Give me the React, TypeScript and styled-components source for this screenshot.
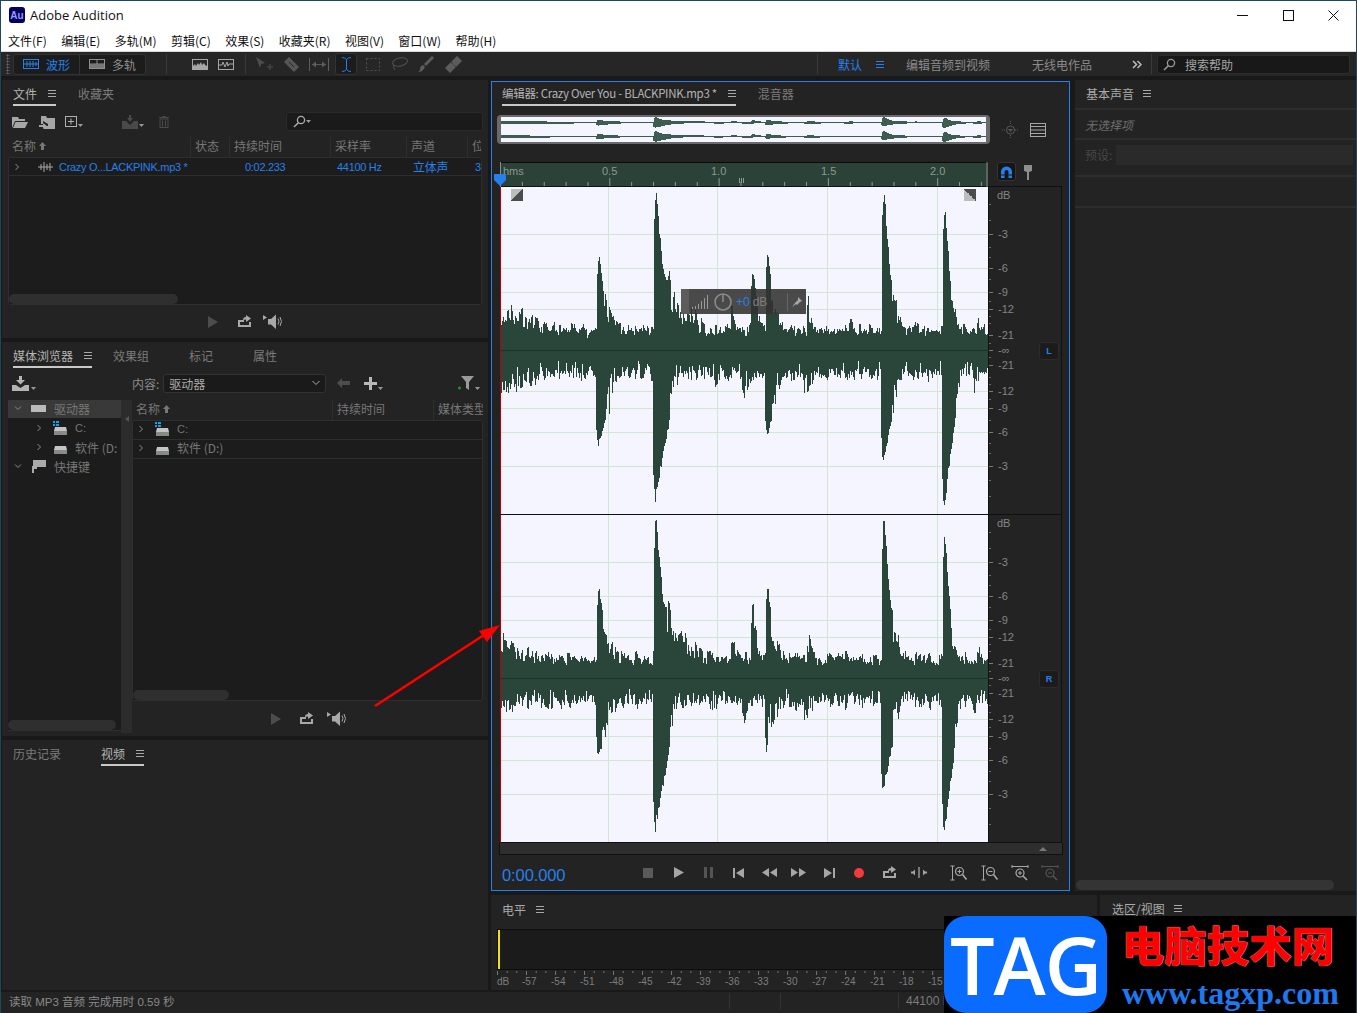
import React from "react";
import styled, { createGlobalStyle } from "styled-components";

const BLUE = "#2680eb";
const CJK = `"Noto Sans CJK SC", "Liberation Sans", sans-serif`;

const Global = createGlobalStyle`
  html, body { margin: 0; padding: 0; overflow: hidden; background: #1a1a1a; }
  * { box-sizing: border-box; }
`;

const Root = styled.div`
  position: relative; width: 1357px; height: 1013px; overflow: hidden;
  display: flex; flex-direction: column; background: #191919;
  border-top: 1px solid #1d4763; border-left: 1px solid #1d4763; border-right: 1px solid #1d4763;
  font-family: ${CJK}; font-size: 12px; color: #9a9a9a;
`;
const TitleBar = styled.div`
  height: 28px; background: #fff; display: flex; align-items: center; padding-left: 8px; flex: none;
  color: #111; font: 13px "Open Sans", "Noto Sans", sans-serif;
`;
const AuLogo = styled.div`
  width: 16px; height: 16px; border-radius: 3px; background: #00005b; color: #9999ff;
  font: bold 10px "Liberation Sans", sans-serif; display: flex; align-items: center; justify-content: center;
  margin-right: 5px;
`;
const WinButtons = styled.div`margin-left: auto; display: flex; align-items: center; gap: 34.5px; margin-right: 17px;`;
const MenuBar = styled.div`
  height: 22px; background: #fff; color: #111; display: flex; align-items: center; gap: 14.4px; padding-left: 7px; flex: none; font-size: 12px;
`;
const Toolbar = styled.div`height: 25px; background: #262626; display: flex; align-items: center; flex: none; border-top: 1px solid #d8d8d8;`;
const Slot = styled.div<{ $ml?: number; $w?: number; $drop?: number }>`
  flex: none; margin-left: ${p => p.$ml ?? 0}px; ${p => (p.$w ? `width: ${p.$w}px;` : "")}
  ${p => (p.$drop ? `margin-top: ${p.$drop}px;` : "")}
  display: flex; align-items: center; justify-content: center;
`;
const Grip = styled.div`width: 4px; height: 20px; margin-left: 5px; background-image: radial-gradient(#666 45%, transparent 50%); background-size: 3px 3px;`;
const Segment = styled.div`
  margin-left: 3px; width: 133px; height: 21px; display: flex; background: #1c1c1c; border: 1px solid #333; border-radius: 3px;
`;
const SegItem = styled.div<{ $on?: boolean }>`
  flex: 1; display: flex; align-items: center; gap: 7px; padding-left: 9px; color: ${p => (p.$on ? BLUE : "#8f8f8f")};
  & + & { border-left: 1px solid #333; }
`;
const VSep = styled.div<{ $ml?: number }>`width: 1px; height: 20px; background: #3a3a3a; margin-left: ${p => p.$ml ?? 0}px; flex: none;`;
const ToolOn = styled.div`
  width: 22px; height: 22px; margin-left: 6px; background: #1c1c1c; border: 1px solid #333; border-radius: 3px;
  display: flex; align-items: center; justify-content: center; flex: none;
`;
const WorkTabs = styled.div`margin-left: auto; display: flex; align-items: center; height: 100%;`;
const WorkTab = styled.span<{ $on?: boolean; $ml?: number }>`color: ${p => (p.$on ? BLUE : "#8a8a8a")}; margin-left: ${p => p.$ml ?? 0}px; flex: none;`;
const HelpSearch = styled.div`
  width: 193px; height: 19px; margin: 0 6px 0 5px; background: #181818; border: 1px solid #2c2c2c; border-radius: 3px;
  display: flex; align-items: center; gap: 9px; padding-left: 5px; color: #a4a4a4;
`;
const Work = styled.div`
  flex: none; height: 914px; padding: 4px 0 0 1px; display: grid; grid-template-columns: 486px 1fr; column-gap: 3px;
`;
const LeftCol = styled.div`display: grid; grid-template-rows: 258px 394px 250px; row-gap: 4px;`;
const RightArea = styled.div`display: grid; grid-template-rows: 811px 95px; row-gap: 4px; min-width: 0;`;
const TopRow = styled.div`display: grid; grid-template-columns: 579px 1fr; column-gap: 5px;`;
const BottomRow = styled.div`display: grid; grid-template-columns: 606px 1fr; column-gap: 3px;`;
const Panel = styled.section`background: #232323; display: flex; flex-direction: column; min-height: 0; min-width: 0; padding-top: 2px; position: relative;`;
const TabBar = styled.div`height: 24px; display: flex; flex: none; padding-left: 11px;`;
const Tab = styled.div<{ $on?: boolean; $ml?: number }>`
  height: 24px; line-height: 23px; display: flex; align-items: center; gap: 11px; margin-left: ${p => p.$ml ?? 0}px;
  color: ${p => (p.$on ? "#b4b4b4" : "#7b7b7b")}; border-bottom: 2px solid ${p => (p.$on ? "#c9c9c9" : "transparent")};
`;
const Ham = () => (
  <svg width="8" height="7" viewBox="0 0 8 7" style={{ flex: "none" }}>
    <path d="M0 .5h8M0 3.5h8M0 6.5h8" stroke="#a8a8a8" strokeWidth="1" />
  </svg>
);
const ActionRow = styled.div<{ $h: number; $pb?: number }>`
  height: ${p => p.$h}px; padding-bottom: ${p => p.$pb ?? 0}px; display: flex; align-items: center; flex: none; position: relative;
`;
const SearchBox = styled.div`
  width: 197px; height: 19px; margin-left: auto; margin-right: 5px; background: #1a1a1a; border: 1px solid #2a2a2a; border-radius: 3px;
  display: flex; align-items: center; padding-left: 6px;
`;
const FileHead = styled.div`
  height: 20px; margin: 0 6px; display: grid; grid-template-columns: 182px 39px 101px 76px 61px 14px; flex: none; overflow: hidden; color: #777;
`;
const HeadCell = styled.div`
  padding: 0 0 3px 4px; white-space: nowrap; overflow: hidden; display: flex; align-items: center; gap: 3px;
  & + & { border-left: 1px solid #2e2e2e; }
`;
const ListBox = styled.div<{ $h: number; $w?: number }>`
  height: ${p => p.$h}px; ${p => (p.$w ? `width: ${p.$w}px;` : "")} background: #1c1c1c; border: 1px solid #2e2e2e; border-radius: 2px; flex: none; position: relative; overflow: hidden;
`;
const FileRow = styled.div`
  height: 18px; display: grid; grid-template-columns: 182px 39px 101px 76px 61px 14px; color: ${BLUE}; border-bottom: 1px solid #2e2e2e;
  font: 11px "Liberation Sans", sans-serif; letter-spacing: -.3px; align-items: center;
`;
const FileName = styled.div`display: flex; align-items: center; padding-left: 4px; white-space: nowrap;`;
const Cell = styled.div<{ $pl?: number; $fs?: number }>`
  padding-left: ${p => p.$pl ?? 0}px; white-space: nowrap; overflow: hidden; font-family: "Liberation Sans", ${CJK};
  ${p => (p.$fs ? `font-size: ${p.$fs}px;` : "")}
`;
const Thumb = styled.div<{ $w: number }>`
  position: absolute; left: 0; bottom: 0; width: ${p => p.$w}px; height: 10px; background: #2f2f2f; border-radius: 5px;
`;
const Footer = styled.div<{ $pl: number }>`flex: 1; display: flex; align-items: center; padding-left: ${p => p.$pl}px; gap: 0;`;
const Padded = styled.div`padding: 0 0 0 6px;`;

const MediaBody = styled.div`display: flex; flex: 1; min-height: 0; padding-left: 6px;`;
const Tree = styled.div`width: 113px; height: 331px; background: #1c1c1c; border-bottom: 1px solid #2e2e2e; position: relative; flex: none; font-size: 12px; color: #777; overflow: hidden;`;
const TreeRow = styled.div<{ $sel?: boolean; $pl: number; $mt?: number }>`
  height: 18px; display: flex; align-items: center; padding-left: ${p => p.$pl}px; background: ${p => (p.$sel ? "#393939" : "transparent")};
  ${p => (p.$sel ? "padding-bottom: 2px;" : "")}
  margin-bottom: 1px; margin-top: ${p => p.$mt ?? 0}px; white-space: nowrap;
`;
const TreeGap = styled.span<{ $w: number }>`display: inline-block; flex: none; width: ${p => p.$w}px;`;
const Splitter = styled.div`
  width: 11px; height: 333px; background: #2c2c2c; flex: none; display: flex; flex-direction: column; align-items: center; position: relative;
`;
const SplitArrow = styled.div`
  width: 0; height: 0; margin-top: 16px; border-style: solid; border-width: 3px 4px 3px 0; border-color: transparent #555 transparent transparent;
`;
const SplitDots = styled.div`
  width: 4px; height: 24px; margin-top: 131px; background-image: radial-gradient(#666 40%, transparent 45%); background-size: 2px 2px;
`;
const MediaRight = styled.div`flex: 1; min-width: 0; padding-right: 5px; display: flex; flex-direction: column;`;
const MediaHead = styled.div`height: 20px; display: grid; grid-template-columns: 200px 101px 1fr; color: #777; flex: none; overflow: hidden;`;
const MediaRow = styled.div`height: 19px; display: flex; align-items: center; padding: 0 0 3px 4px; border-bottom: 1px solid #2e2e2e; color: #777; white-space: nowrap;`;
const ContentLabel = styled.span`color: #8a8a8a; margin-left: 96px; flex: none;`;
const Select = styled.div`
  width: 163px; height: 19px; margin-left: 4px; background: #1a1a1a; border: 1px solid #333; border-radius: 3px; color: #aaa;
  display: flex; align-items: center; justify-content: space-between; padding: 0 5px; flex: none;
`;

const Editor = styled.section`
  margin-top: 1px; height: 810px; background: #232323; border: 1px solid ${BLUE}; display: flex; flex-direction: column; min-width: 0;
`;
const EditorTabs = styled(TabBar)`padding-left: 10px; color: #aaa;`;
const EdName = styled.span`white-space: nowrap; font-family: "Noto Sans CJK SC", sans-serif; letter-spacing: -.3px; font-size: 11.5px;`;
const OverviewRow = styled.div`margin: 9px 0 0 5px; height: 29px; display: flex; align-items: center; flex: none;`;
const OverviewFrame = styled.div`
  width: 493px; height: 29px; background: #f4f5ff; border: 2px solid #6a6a6a; border-left-width: 4px; border-right-width: 4px; border-radius: 4px; overflow: hidden; flex: none; display: flex;
`;
const RulerRow = styled.div`margin: 18px 0 0 8px; height: 25px; display: flex; flex: none; position: relative;`;
const Magnet = styled.div`
  width: 19px; height: 19px; margin: 0 0 0 9px; background: #161616; border: 1px solid #333; border-radius: 3px; display: flex; align-items: center; justify-content: center; flex: none;
`;
const Playhead = styled.div`position: absolute; left: -6px; top: 12px;`;
const ChannelRow = styled.div`margin-left: 8px; height: 328px; display: flex; flex: none;`;
const Wave = styled.div`width: 488px; height: 328px; background: #f4f5ff; position: relative; flex: none; border-left: 1px solid #b00; border-bottom: 1px solid #111;`;
const Scale = styled.div`width: 74px; height: 328px; border: 1px solid #111; border-top: none; position: relative; flex: none; box-shadow: 0 -1px 0 #111;`;
const ChanBadge = styled.div`
  position: absolute; right: 2px; top: 155px; width: 20px; height: 18px; background: #1b1b1b; border: 1px solid #2b2b2b; border-radius: 3px; color: ${BLUE};
  font: bold 9px "Liberation Sans", sans-serif; display: flex; align-items: center; justify-content: center;
`;
const Fade = styled.div<{ $right?: boolean }>`
  position: absolute; top: 2px; ${p => (p.$right ? "right: 12px;" : "left: 10px;")} width: 12px; height: 12px;
  background: linear-gradient(${p => (p.$right ? "45deg" : "135deg")}, #bdbdbd 50%, #4c4c4c 50%);
`;
const Hud = styled.div`
  position: absolute; left: 180px; top: 102px; width: 125px; height: 25px; background: rgba(50,50,50,.88); display: flex; align-items: center; color: #7d7d7d;
  font: 11px "Liberation Sans", sans-serif;
`;
const HudGrip = styled.div`width: 8px; height: 25px; background: #5c5c5c; flex: none;`;
const HudGain = styled.span`color: ${BLUE}; margin-left: 4px; font-size: 12px;`;
const HudUnit = styled.span`margin-left: 3px; font-size: 12px;`;
const HudSep = styled.div`width: 1px; height: 18px; background: #666; margin-left: 20px; flex: none;`;
const HScroll = styled.div`
  margin-left: 7px; width: 564px; height: 12px; background: #2e2e2e; border: 1px solid #111; border-top: none; flex: none;
  display: flex; align-items: center; justify-content: center; position: relative;
`;
const HGrip = styled.div`width: 24px; height: 5px; background-image: radial-gradient(#777 40%, transparent 45%); background-size: 2px 2px;`;
const HUp = styled.div`
  position: absolute; right: 15px; top: 4px; width: 0; height: 0; border-style: solid; border-width: 0 4px 4px 4px; border-color: transparent transparent #777 transparent;
`;
const Transport = styled.div`flex: 1; display: flex; align-items: center; padding-left: 10px;`;
const Clock = styled.div`color: ${BLUE}; font: 16.5px "Liberation Sans", sans-serif; width: 141px; flex: none; letter-spacing: -.1px; margin-top: 5px;`;

const SideHeader = styled.div<{ $plain?: boolean }>`
  height: 28px; display: flex; align-items: center; gap: 9px; padding: 0 0 4px ${p => (p.$plain ? 12 : 11)}px; color: #aaa; flex: none;
  border-bottom: 2px solid ${p => (p.$plain ? "transparent" : "#2d2d2d")};
`;
const SideNote = styled.div`height: 30px; display: flex; align-items: center; padding: 0 0 0 10px; color: #6e6e6e; font-style: italic; flex: none; border-bottom: 2px solid #2d2d2d;`;
const PresetRow = styled.div`height: 37px; display: flex; align-items: center; padding: 0 0 6px 10px; color: #474747; flex: none; border-bottom: 2px solid #2d2d2d;`;
const PresetInput = styled.div`width: 237px; height: 20px; margin-left: 4px; background: #2a2a2a; flex: none;`;
const SideBlank = styled.div`height: 31px; flex: none; border-bottom: 2px solid #2d2d2d;`;
const SideScroll = styled.div`margin: auto 0 1px 1px; width: 258px; height: 10px; background: #343434; border-radius: 5px; flex: none;`;

const LevelHead = styled.div`height: 26px; display: flex; align-items: center; gap: 10px; padding: 0 0 2px 11px; color: #a8a8a8; flex: none;`;
const LevelBox = styled.div`margin: 6px 0 0 6px; height: 41px; width: 600px; background: #1b1b1b; border: 1px solid #0e0e0e; flex: none; display: flex;`;
const Yellow = styled.div`width: 2px; height: 100%; background: #f1e21a; flex: none;`;
const LevelScale = styled.svg`margin-left: 6px; flex: none; display: block;`;

const Status = styled.footer`
  height: 21px; margin-top: 2px; padding: 0 0 3px 8px; background: #232323; display: flex; align-items: center; color: #8a8a8a; flex: none; font-size: 11.5px;
`;
const StatusSep = styled.div<{ $ml: number }>`width: 1px; height: 16px; background: #333; margin-left: ${p => p.$ml}px; flex: none;`;
const StatusText = styled.div`width: 720px; flex: none; white-space: nowrap; font-family: "Liberation Sans", ${CJK};`;
const StatusRate = styled.span`margin-left: 7px; font: 12px "Liberation Sans", sans-serif; color: #7c7c7c; white-space: nowrap;`;

const Watermark = styled.div`
  position: absolute; right: -1px; bottom: 0; width: 413px; height: 97px; background: #000; display: flex;
`;
const TagBadge = styled.div`
  width: 163px; height: 97px; background: #0a6cff; border-radius: 22px; color: #fff; flex: none;
  display: flex; align-items: center; justify-content: center; font: 600 79px/1 "Open Sans", sans-serif; letter-spacing: -1px;
`;
const TagRight = styled.div`display: flex; flex-direction: column; margin-left: 15px; flex: none;`;
const TagCn = styled.div`color: #ff0000; font: 900 42.5px/46px "Noto Sans CJK SC", sans-serif; margin-top: 5px; white-space: nowrap; text-shadow: 0 0 1px #fff;`;
const TagUrl = styled.div`color: #1f78ee; font: bold 32px/36px "Liberation Serif", serif; margin-top: 8px; white-space: nowrap;`;
const ArrowLayer = styled.svg`position: absolute; left: 0; top: 0; pointer-events: none;`;

/* ---------- waveform ---------- */
type Peak = [number, number, number, number, number];
function mulberry(seed: number) {
  return () => {
    seed |= 0; seed = (seed + 0x6d2b79f5) | 0;
    let t = Math.imul(seed ^ (seed >>> 15), 1 | seed);
    t = (t + Math.imul(t ^ (t >>> 7), 61 | t)) ^ t;
    return ((t ^ (t >>> 14)) >>> 0) / 4294967296;
  };
}
function env(x: number, peaks: Peak[], floor: number) {
  let v = floor;
  for (const [px, a, w, tail, tau] of peaks) {
    const d = x - px;
    if (d < -2) continue;
    const knee = Math.max(tail, a * 0.5);
    let e: number;
    if (d <= 0) e = a * (1 + d * 0.12);
    else if (d <= w) e = a - (a - knee) * (d / Math.max(w, 1));
    else e = tail * Math.exp(-(d - w) / tau) + (knee - tail) * Math.exp(-(d - w) / 4);
    v = Math.max(v, e);
  }
  return v;
}
function wavePath(up: Peak[], down: Peak[], seed: number, cy: number) {
  const r = mulberry(seed);
  let d = "";
  let hold = 0;
  for (let x = 0; x < 488; x++) {
    if (x % 2 === 0) hold = r();
    const eu = env(x + 0.5, up, 24);
    const el = env(x + 0.5, down, 30);
    const fu = eu > 70 ? 0.93 + 0.07 * r() : 0.5 + 0.4 * hold + 0.26 * r();
    let fl = el > 70 ? 0.92 + 0.08 * r() : 0.5 + 0.34 * r() + 0.26 * hold;
    if (el <= 70 && r() < 0.12) fl *= 0.62;
    d += `M${x + 0.5} ${(cy - eu * fu).toFixed(1)}V${(cy + el * fl).toFixed(1)}`;
  }
  return d;
}
function overviewPath(up: Peak[], down: Peak[], cy: number) {
  let d = "";
  for (let x = 0; x < 485; x++) {
    const u = 0.7 + 5 * Math.pow(env(x + 0.5, up, 0) / 165, 1.5);
    const l = 0.7 + 5 * Math.pow(env(x + 0.5, down, 0) / 165, 1.5);
    d += `M${x + 0.5} ${(cy - u).toFixed(1)}V${(cy + l).toFixed(1)}`;
  }
  return d;
}
const UP1: Peak[] = [[0, 52, 1, 46, 90], [98, 98, 7, 44, 30], [155, 166, 7, 76, 42], [168, 84, 4, 52, 32], [232, 48, 3, 32, 8], [252, 84, 5, 36, 10], [267, 104, 5, 46, 18], [308, 56, 3, 34, 18], [383, 168, 6, 56, 24], [444, 152, 5, 52, 16], [478, 40, 2, 28, 8], [350, 36, 2, 26, 14], [415, 34, 2, 26, 10]];
const DOWN1: Peak[] = [[0, 52, 1, 50, 90], [97, 100, 14, 48, 12], [154, 155, 14, 66, 14], [215, 42, 5, 30, 10], [243, 62, 6, 36, 8], [266, 92, 10, 50, 14], [305, 56, 6, 40, 16], [382, 115, 12, 52, 14], [443, 166, 10, 56, 12], [474, 50, 3, 36, 8], [345, 40, 2, 32, 14]];
const UP2: Peak[] = [[0, 56, 1, 42, 70], [98, 94, 7, 42, 28], [155, 168, 7, 74, 42], [168, 82, 4, 50, 32], [232, 46, 3, 30, 8], [252, 82, 5, 36, 10], [267, 96, 5, 44, 18], [308, 52, 3, 32, 18], [383, 168, 6, 52, 24], [444, 152, 5, 50, 16], [478, 44, 2, 28, 8]];
const DOWN2: Peak[] = [[0, 42, 1, 38, 90], [97, 82, 14, 42, 12], [154, 157, 14, 60, 14], [215, 36, 5, 28, 10], [243, 54, 6, 32, 8], [266, 74, 10, 44, 14], [305, 50, 6, 36, 16], [382, 117, 12, 50, 14], [443, 163, 10, 52, 12], [474, 44, 3, 32, 8]];
const PATH1 = wavePath(UP1, DOWN1, 7, 163);
const PATH2 = wavePath(UP2, DOWN2, 23, 163);
const OV1 = overviewPath(UP1, DOWN1, 5.5);
const OV2 = overviewPath(UP2, DOWN2, 19.5);

const DB_Y = [47, 81, 105, 122, 148, 178, 204, 221, 245, 279];
const GRID_X = [107, 216, 326, 436];

const Channel = ({ path }: { path: string }) => (
  <svg width="487" height="327" viewBox="0 0 487 327" style={{ display: "block" }} shapeRendering="crispEdges">
    {DB_Y.map(y => <path key={y} d={`M0 ${y + .5}H487`} stroke="#d3e5d3" />)}
    {GRID_X.map(x => <path key={x} d={`M${x + .5} 0V327`} stroke="#d3e5d3" />)}
    <path d={path} stroke="#2a4539" strokeWidth="1" fill="none" />
    <path d="M0 163.5H487" stroke="#1d3229" />
  </svg>
);

const SCALE_LABELS: [number, string][] = [[47, "-3"], [81, "-6"], [105, "-9"], [122, "-12"], [148, "-21"], [163, "-∞"], [178, "-21"], [204, "-12"], [221, "-9"], [245, "-6"], [279, "-3"]];
const ScaleDraw = () => (
  <svg width="72" height="327" viewBox="0 0 72 327" style={{ display: "block" }} fontFamily="Liberation Sans, sans-serif" fontSize="11" fill="#858585">
    <text x="8" y="12">dB</text>
    {SCALE_LABELS.map(([y, t], i) => (
      <g key={i}>
        <path d={`M0 ${y + .5}H4`} stroke="#7a7a7a" />
        <text x="9" y={y + 4}>{t}</text>
      </g>
    ))}
    {[17, 33, 60, 70, 92, 114, 129, 136, 156, 170, 190, 197, 212, 233, 256, 266, 293, 309].map(y => <path key={y} d={`M0 ${y + .5}H2`} stroke="#6a6a6a" />)}
  </svg>
);

const Ruler = () => {
  const ticks: number[] = [];
  for (let i = 0; i < 23; i++) ticks.push(i * 21.86);
  return (
    <svg width="488" height="25" viewBox="0 0 488 25" style={{ display: "block", flex: "none" }} fontFamily="Liberation Sans, sans-serif" fontSize="11" fill="#8b9a92">
      <rect width="488" height="25" fill="#2a4237" />
      <path d="M0 .5H488" stroke="#0a0a0a" />
      <path d="M0 24.5H488" stroke="#111" />
      <text x="3" y="13">hms</text>
      {[["0.5", 102], ["1.0", 211], ["1.5", 321], ["2.0", 430]].map(([t, x]) => <text key={t} x={x} y="13">{t}</text>)}
      {ticks.map((x, i) => <path key={i} d={`M${x + .5} ${i % 5 === 0 ? 16 : 20}V24`} stroke="#8d9c95" />)}
      <path d="M239.5 16V21M241.5 16V21M243.5 16V21" stroke="#8b9a92" />
      <path d="M.5 0V25M487 0V25" stroke="#8a8a8a" />
    </svg>
  );
};

/* ---------- icons ---------- */
const G = ({ w, h, c = "#9a9a9a", children }: { w: number; h: number; c?: string; children: React.ReactNode }) => (
  <svg width={w} height={h} viewBox={`0 0 ${w} ${h}`} style={{ color: c, display: "block", flex: "none" }} fill="currentColor" stroke="none">{children}</svg>
);
const stroke = { stroke: "currentColor", fill: "none" } as const;
const Chev = ({ down }: { down?: boolean }) => (
  <G w={8} h={8} c="#8a8a8a"><path d={down ? "M1 2.5l3 3 3-3" : "M2.5 1l3 3-3 3"} {...stroke} strokeWidth="1" /></G>
);
const MiniWave = ({ c }: { c: string }) => (
  <G w={15} h={10} c={c}><path d="M0 5h15M3 2v6M6 0v10M9 2v6M12 1v8" {...stroke} /></G>
);
const PlayIcon = ({ c }: { c: string }) => <G w={10} h={12} c={c}><path d="M0 0l10 6-10 6z" /></G>;
const LoopIcon = ({ c = "#a8a8a8" }: { c?: string }) => (
  <G w={15} h={13} c={c}><path d="M1 5h6v2H3v3h9V7h2v5H1zM6 5q0-3 3-3V0l5 3.5L9 7V4.5q-2 0-3 .5z" /></G>
);
const SpeakerIcon = () => (
  <G w={20} h={15} c="#a8a8a8">
    <path d="M0 1l4 2.500L0 6zM5 5h3l5-4.500v14.500l-5-4.500H5z" />
    <path d="M15 4.500q2 3 0 6M17 3q3 4.500 0 9" {...stroke} />
  </G>
);
const DriveIcon = ({ win }: { win?: boolean }) => (
  <G w={15} h={14}>
    {win && <path d="M0 0h2v2H0zM3 0h3v2H3zM0 3h2v2H0zM3 3h3v2H3z" fill="#19a0e8" />}
    <path d="M1 10l1-4h11l1 4z" fill="#c4c4c4" />
    <rect x="1" y="10" width="13" height="4" fill="#888" />
    <rect x="10" y="11.500" width="2" height="1" fill="#4c4" />
  </G>
);
const SearchGlass = ({ c = "#9a9a9a" }: { c?: string }) => (
  <G w={13} h={13} c={c}><circle cx="8" cy="5" r="3.6" {...stroke} strokeWidth="1.3" /><path d="M5.300 7.700L1 12" {...stroke} strokeWidth="1.5" /></G>
);
const Caret = () => <G w={5} h={3} c="#999"><path d="M0 0h5L2.500 3z" /></G>;

const ZoomIcon = ({ kind, c = "#a8a8a8" }: { kind: "v+" | "v-" | "h+" | "h-"; c?: string }) => {
  const plus = kind.endsWith("+");
  const vert = kind.startsWith("v");
  return (
    <G w={18} h={16} c={c}>
      {vert
        ? <path d="M2.500 1v14M.5 1h4M.5 15h4" {...stroke} />
        : <path d="M1 1.500h16M1 0v3M17 0v3" {...stroke} />}
      <circle cx={vert ? 9.500 : 9} cy={vert ? 6.500 : 8} r="4" {...stroke} strokeWidth="1.200" />
      <path d={vert ? "M12.500 9.500l4 5" : "M12 11l4 4"} {...stroke} strokeWidth="1.600" />
      <path d={vert ? `M7.500 6.500h4${plus ? "M9.500 4.500v4" : ""}` : `M7 8h4${plus ? "M9 6v4" : ""}`} {...stroke} />
    </G>
  );
};

export default function App() {
  return (
    <>
      <Global />
      <Root>
        <TitleBar>
          <AuLogo>Au</AuLogo>
          Adobe Audition
          <WinButtons>
            <svg width="11" height="11" viewBox="0 0 11 11"><path d="M0 5.500h11" stroke="#111" /></svg>
            <svg width="11" height="11" viewBox="0 0 11 11"><rect x=".5" y=".5" width="10" height="10" fill="none" stroke="#111" /></svg>
            <svg width="11" height="11" viewBox="0 0 11 11"><path d="M.5 .5l10 10M10.500 .5l-10 10" stroke="#111" /></svg>
          </WinButtons>
        </TitleBar>
        <MenuBar>
          {["文件(F)", "编辑(E)", "多轨(M)", "剪辑(C)", "效果(S)", "收藏夹(R)", "视图(V)", "窗口(W)", "帮助(H)"].map(m => <span key={m}>{m}</span>)}
        </MenuBar>
        <Toolbar>
          <Grip />
          <Segment>
            <SegItem $on><G w={16} h={10} c={BLUE}><rect x=".5" y=".5" width="15" height="9" {...stroke} /><path d="M0 5h16M4 2v6M7 2v6M10 2v6M13 3v4" {...stroke} /></G><span>波形</span></SegItem>
            <SegItem><G w={16} h={10} c="#8f8f8f"><rect x=".5" y=".5" width="15" height="9" {...stroke} /><path d="M0 5h16M8 0v5" {...stroke} /><rect x="1" y="5" width="14" height="4" fill="#777" /></G><span>多轨</span></SegItem>
          </Segment>
          <VSep $ml={20} />
          <Slot $ml={25}><G w={16} h={11} c="#a6a6a6"><rect x=".5" y=".5" width="15" height="10" {...stroke} /><path d="M1 10V7l2-2 1 2 2-3 1 2 2-3 1 3 2-2 1 2 2 1v3z" /></G></Slot>
          <Slot $ml={10}><G w={16} h={11} c="#a6a6a6"><rect x=".5" y=".5" width="15" height="10" {...stroke} /><path d="M1 6h3l1-3 2 5 2-5 1 4 1-2h4" {...stroke} /></G></Slot>
          <VSep $ml={11} />
          <Slot $ml={9}><G w={18} h={15} c="#4e4e4e"><path d="M1 0l9 6-4 1-1 4z" /><path d="M12 10h6M15 7v6" {...stroke} /></G></Slot>
          <Slot $ml={11}><G w={17} h={17} c="#565656"><path d="M0 6l5-5 10 10-5 5z" /><path d="M5 6l5 5" stroke="#262626" /></G></Slot>
          <Slot $ml={8}><G w={20} h={13} c="#5c5c5c"><path d="M.5 0v13M19.500 0v13M3 6.500h14" {...stroke} /><path d="M3 6.500l4-3v6zM17 6.500l-4-3v6z" /></G></Slot>
          <ToolOn><G w={9} h={15} c={BLUE}><path d="M0 .5q3 0 4.500 2Q6 .5 9 .5M4.500 2.500v10M0 14.500q3 0 4.500-2 1.500 2 4.500 2" {...stroke} /></G></ToolOn>
          <Slot $ml={9}><G w={14} h={13} c="#535353"><rect x=".5" y=".5" width="13" height="12" {...stroke} strokeDasharray="2 2" /></G></Slot>
          <Slot $ml={11}><G w={17} h={14} c="#535353"><ellipse cx="9" cy="5" rx="7.500" ry="4" {...stroke} transform="rotate(-12 9 5)" /><path d="M3 8q-1 3 1 5" {...stroke} /></G></Slot>
          <Slot $ml={10}><G w={16} h={16} c="#5c5c5c"><path d="M14 0l2 2-8 8-2-2zM5 9l2 2q-2 5-7 5 3-2 2-4 1-3 3-3z" /></G></Slot>
          <Slot $ml={11}><G w={17} h={17} c="#5c5c5c"><path d="M0 12L12 0l5 5L5 17z" /><path d="M6 6l5 5" stroke="#262626" strokeDasharray="1 1" /></G></Slot>
          <WorkTabs>
            <VSep />
            <WorkTab $on $ml={20}>默认</WorkTab>
            <Slot $ml={14}><svg width="8" height="7" viewBox="0 0 8 7"><path d="M0 .5h8M0 3.500h8M0 6.500h8" stroke={BLUE} /></svg></Slot>
            <WorkTab $ml={22}>编辑音频到视频</WorkTab>
            <WorkTab $ml={42}>无线电作品</WorkTab>
            <Slot $ml={40}><G w={10} h={9} c="#bbb"><path d="M1 1l3.500 3.500L1 8M5.500 1L9 4.500 5.500 8" {...stroke} strokeWidth="1.500" /></G></Slot>
            <VSep $ml={9} />
            <HelpSearch><SearchGlass c="#9a9a9a" /><span>搜索帮助</span></HelpSearch>
          </WorkTabs>
        </Toolbar>

        <Work>
          <LeftCol>
            <Panel>
              <TabBar>
                <Tab $on>文件 <Ham /></Tab>
                <Tab $ml={22}>收藏夹</Tab>
              </TabBar>
              <ActionRow $h={31}>
                <Slot $ml={10}><G w={16} h={13} c="#a6a6a6"><path d="M0 2h6l1 2h6v2H3L0 13zM3.500 7H16l-3 6H1z" /></G></Slot>
                <Slot $ml={11}><G w={16} h={14} c="#a6a6a6"><path d="M2 1h5l1 2h8v11H5v-3h4V9l-5-3v3H2z" /><path d="M0 10h4V8l4 3-4 3v-2H0z" /></G></Slot>
                <Slot $ml={10}><G w={12} h={11} c="#b0b0b0"><rect x=".5" y=".5" width="11" height="10" {...stroke} /><path d="M3 5.500h6M6 2.500v6" {...stroke} /></G></Slot>
                <Slot $ml={1} $drop={8}><Caret /></Slot>
                <Slot $ml={39}><G w={16} h={14} c="#4a4a4a"><path d="M7 0h2v3h2L8 7 5 3h2zM0 6h4l4 4 4-4h4v8H0z" /></G></Slot>
                <Slot $ml={1} $drop={8}><Caret /></Slot>
                <Slot $ml={15}><G w={10} h={12} c="#4a4a4a"><path d="M0 1.500h10M3.500 1.500V.5h3v1M1 3h8v8.500H1zM3.500 4.500v6M6.500 4.500v6" {...stroke} /></G></Slot>
                <SearchBox><SearchGlass c="#aaa" /><Caret /></SearchBox>
              </ActionRow>
              <FileHead>
                <HeadCell>名称<G w={7} h={8} c="#777"><path d="M3.500 0L7 4H5v4H2V4H0z" /></G></HeadCell>
                <HeadCell>状态</HeadCell><HeadCell>持续时间</HeadCell><HeadCell>采样率</HeadCell><HeadCell>声道</HeadCell><HeadCell>位</HeadCell>
              </FileHead>
              <Padded>
                <ListBox $h={148} $w={474}>
                  <FileRow>
                    <FileName><Chev /><TreeGap $w={17} /><MiniWave c="#a8a8a8" /><TreeGap $w={6} />Crazy O...LACKPINK.mp3 *</FileName>
                    <Cell />
                    <Cell $pl={15}>0:02.233</Cell>
                    <Cell $pl={6}>44100 Hz</Cell>
                    <Cell $pl={6} $fs={12}>立体声</Cell>
                    <Cell $pl={7}>3</Cell>
                  </FileRow>
                  <Thumb $w={169} />
                </ListBox>
              </Padded>
              <Footer $pl={206}>
                <PlayIcon c="#4c4c4c" />
                <Slot $ml={19}><LoopIcon /></Slot>
                <Slot $ml={11}><SpeakerIcon /></Slot>
              </Footer>
            </Panel>

            <Panel>
              <TabBar>
                <Tab $on>媒体浏览器 <Ham /></Tab>
                <Tab $ml={21}>效果组</Tab>
                <Tab $ml={40}>标记</Tab>
                <Tab $ml={40}>属性</Tab>
              </TabBar>
              <ActionRow $h={32} $pb={2}>
                <Slot $ml={10}><G w={17} h={15} c="#b4b4b4"><path d="M7 0h3v4h3L8.500 8.500 4 4h3zM0 9h4l4.500 3L13 9h4v6H0z" /></G></Slot>
                <Slot $ml={2} $drop={10}><Caret /></Slot>
                <ContentLabel>内容:</ContentLabel>
                <Select>
                  <span>驱动器</span>
                  <G w={8} h={6} c="#aaa"><path d="M.5 1l3.500 3.500L7.500 1" {...stroke} /></G>
                </Select>
                <Slot $ml={11}><G w={13} h={10} c="#4d4d4d"><path d="M0 5l5-5v3h8v4H5v3z" /></G></Slot>
                <Slot $ml={14}><G w={13} h={13} c="#b8b8b8"><path d="M5 0h3v5h5v3H8v5H5V8H0V5h5z" /></G></Slot>
                <Slot $ml={1} $drop={10}><Caret /></Slot>
                <Slot $ml={75}><G w={16} h={15} c="#9a9a9a"><circle cx="1.500" cy="12" r="1.500" fill="#1c9a2c" /><path d="M3 0h13l-5 6v8l-3-2V6z" /></G></Slot>
                <Slot $ml={1} $drop={10}><Caret /></Slot>
              </ActionRow>
              <MediaBody>
                <Tree>
                  <TreeRow $sel $pl={6}><Chev down /><TreeGap $w={9} /><G w={15} h={7} c="#bbb"><path d="M0 0h15v7H0z" /></G><TreeGap $w={8} />驱动器</TreeRow>
                  <TreeRow $pl={27} $mt={1}><Chev /><TreeGap $w={10} /><DriveIcon win /><TreeGap $w={7} /><Cell $fs={11}>C:</Cell></TreeRow>
                  <TreeRow $pl={27}><Chev /><TreeGap $w={10} /><DriveIcon /><TreeGap $w={7} />软件 (D:</TreeRow>
                  <TreeRow $pl={6}><Chev down /><TreeGap $w={9} /><G w={15} h={13} c="#aaa"><path d="M2 0h13v7H6v2H3v4H1V6H2z" /></G><TreeGap $w={8} />快捷键</TreeRow>
                  <Thumb $w={108} />
                </Tree>
                <Splitter><SplitArrow /><SplitDots /></Splitter>
                <MediaRight>
                  <MediaHead>
                    <HeadCell>名称<G w={7} h={8} c="#777"><path d="M3.500 0L7 4H5v4H2V4H0z" /></G></HeadCell>
                    <HeadCell>持续时间</HeadCell><HeadCell>媒体类型</HeadCell>
                  </MediaHead>
                  <ListBox $h={281}>
                    <MediaRow><Chev /><TreeGap $w={10} /><DriveIcon win /><TreeGap $w={7} /><Cell $fs={11}>C:</Cell></MediaRow>
                    <MediaRow><Chev /><TreeGap $w={10} /><DriveIcon /><TreeGap $w={7} />软件 (D:)</MediaRow>
                    <Thumb $w={96} />
                  </ListBox>
                  <Footer $pl={139}>
                    <PlayIcon c="#4c4c4c" />
                    <Slot $ml={18}><LoopIcon /></Slot>
                    <Slot $ml={13}><SpeakerIcon /></Slot>
                  </Footer>
                </MediaRight>
              </MediaBody>
            </Panel>

            <Panel>
              <TabBar>
                <Tab>历史记录</Tab>
                <Tab $on $ml={40}>视频 <Ham /></Tab>
              </TabBar>
            </Panel>
          </LeftCol>

          <RightArea>
            <TopRow>
              <Editor>
                <EditorTabs>
                  <Tab $on><EdName>编辑器: Crazy Over You - BLACKPINK.mp3 *</EdName> <Ham /></Tab>
                  <Tab $ml={22}>混音器</Tab>
                </EditorTabs>
                <OverviewRow>
                  <OverviewFrame>
                    <svg width="485" height="25" viewBox="0 0 485 25" shapeRendering="crispEdges" style={{ display: "block" }}>
                      <path d={OV1} stroke="#3f5c50" strokeWidth="1" fill="none" />
                      <path d={OV2} stroke="#3f5c50" strokeWidth="1" fill="none" />
                    </svg>
                  </OverviewFrame>
                  <Slot $ml={12}><G w={17} h={18} c="#585858"><circle cx="8.500" cy="9" r="4" {...stroke} /><path d="M8.500 0v4M8.500 14v4M0 9h4M13 9h4" {...stroke} strokeDasharray="1 1" /><path d="M6 8h5L8.500 11z" /></G></Slot>
                  <Slot $ml={11}><G w={16} h={14} c="#a6a6a6"><rect x=".5" y=".5" width="15" height="13" {...stroke} /><path d="M1 3.500h14M1 7h14M1 10.500h14" {...stroke} /></G></Slot>
                </OverviewRow>
                <RulerRow>
                  <Ruler />
                  <Magnet><G w={11} h={12} c={BLUE}><path d="M0 6a5.500 5.500 0 0 1 11 0v6H7.500V6a2 2 0 0 0-4 0v6H0z" /><path d="M0 9h3.500M7.500 9H11" stroke="#161616" /></G></Magnet>
                  <Slot $ml={7} $drop={3} style={{ alignSelf: "flex-start" }}><G w={10} h={15} c="#8e8e8e"><path d="M1 0h8v6L6 7v8H4V7L1 6z" /></G></Slot>
                  <Playhead><G w={12} h={12} c={BLUE}><path d="M0 0h12v6l-6 6-6-6z" /></G></Playhead>
                </RulerRow>
                <ChannelRow>
                  <Wave>
                    <Channel path={PATH1} />
                    <Fade />
                    <Fade $right />
                    <Hud>
                      <HudGrip />
                      <Slot $ml={3}><G w={16} h={14} c="#9a9a9a"><path d="M0 12h1v2H0zM3 11h1v3H3zM6 9h1v5H6zM9 6h1v8H9zM12 3h1v11h-1zM15 0h1v14h-1z" /></G></Slot>
                      <Slot $ml={6}><G w={18} h={18} c="#8a8a8a"><circle cx="9" cy="9" r="8" {...stroke} strokeWidth="1.600" /><path d="M9 1v8" {...stroke} strokeWidth="1.600" /></G></Slot>
                      <HudGain>+0</HudGain>
                      <HudUnit>dB</HudUnit>
                      <HudSep />
                      <Slot $ml={4}><G w={10} h={10} c="#a8a8a8"><path d="M6 0l4 4-2 1-2 2-1 1-2-2 1-1 2-2zM3 6l1 1-4 3z" /></G></Slot>
                    </Hud>
                  </Wave>
                  <Scale><ScaleDraw /><ChanBadge>L</ChanBadge></Scale>
                </ChannelRow>
                <ChannelRow>
                  <Wave>
                    <Channel path={PATH2} />
                  </Wave>
                  <Scale><ScaleDraw /><ChanBadge>R</ChanBadge></Scale>
                </ChannelRow>
                <HScroll><HGrip /><HUp /></HScroll>
                <Transport>
                  <Clock>0:00.000</Clock>
                  <Slot $w={10}><G w={10} h={10} c="#5a5a5a"><rect width="10" height="10" /></G></Slot>
                  <Slot $ml={21}><G w={10} h={11} c="#a6a6a6"><path d="M0 0l10 5.500L0 11z" /></G></Slot>
                  <Slot $ml={20}><G w={9} h={11} c="#555"><path d="M0 0h3v11H0zM6 0h3v11H6z" /></G></Slot>
                  <Slot $ml={20}><G w={11} h={10} c="#a6a6a6"><path d="M0 0h2v10H0zM11 0v10L3 5z" /></G></Slot>
                  <Slot $ml={18}><G w={15} h={9} c="#a6a6a6"><path d="M7 0v9L0 4.500zM15 0v9L8 4.500z" /></G></Slot>
                  <Slot $ml={14}><G w={15} h={9} c="#a6a6a6"><path d="M0 0l7 4.500L0 9zM8 0l7 4.500L8 9z" /></G></Slot>
                  <Slot $ml={18}><G w={11} h={10} c="#a6a6a6"><path d="M0 0l8 5-8 5zM9 0h2v10H9z" /></G></Slot>
                  <Slot $ml={19}><G w={10} h={10} c="#f23b3b"><circle cx="5" cy="5" r="5" /></G></Slot>
                  <Slot $ml={18}><LoopIcon /></Slot>
                  <Slot $ml={14}><G w={16} h={11} c="#a6a6a6"><path d="M7.500 0v11M8.500 0v11" stroke="#777" /><path d="M0 4.500h2l2-2v6l-2-2H0zM16 4.500h-2l-2-2v6l2-2h2z" /></G></Slot>
                  <Slot $ml={23}><ZoomIcon kind="v+" /></Slot>
                  <Slot $ml={13}><ZoomIcon kind="v-" /></Slot>
                  <Slot $ml={12}><ZoomIcon kind="h+" /></Slot>
                  <Slot $ml={12}><ZoomIcon kind="h-" c="#555" /></Slot>
                </Transport>
              </Editor>
              <Panel>
                <SideHeader>基本声音 <Ham /></SideHeader>
                <SideNote>无选择项</SideNote>
                <PresetRow>预设:<PresetInput /></PresetRow>
                <SideBlank />
                <SideScroll />
              </Panel>
            </TopRow>
            <BottomRow>
              <Panel>
                <LevelHead>电平 <Ham /></LevelHead>
                <LevelBox><Yellow /></LevelBox>
                <LevelScale width="600" height="20" viewBox="0 0 600 20" fontFamily="Liberation Sans, sans-serif" fontSize="10" fill="#7d7d7d">
                  {Array.from({ length: 46 }, (_, i) => <path key={i} d={`M${i * 9.67 + .5} 1V${i % 3 === 0 ? 5 : 3}`} stroke="#777" />)}
                  <text x="0" y="15">dB</text>
                  {[-57, -54, -51, -48, -45, -42, -39, -36, -33, -30, -27, -24, -21, -18, -15].map((n, i) => (
                    <text key={n} x={25 + i * 29} y="15">{n}</text>
                  ))}
                </LevelScale>
              </Panel>
              <Panel>
                <SideHeader $plain>选区/视图 <Ham /></SideHeader>
              </Panel>
            </BottomRow>
          </RightArea>
        </Work>

        <Status>
          <StatusText>读取 MP3 音频 完成用时 0.59 秒</StatusText>
          <StatusSep $ml={0} />
          <StatusSep $ml={50} />
          <StatusSep $ml={117} />
          <StatusRate>44100 Hz</StatusRate>
        </Status>

        <ArrowLayer width="1357" height="1013" viewBox="0 0 1357 1013">
          <path d="M374 705L486 632" stroke="#f00" strokeWidth="2.500" />
          <path d="M499 624L478 630L486 641z" fill="#f00" />
        </ArrowLayer>

        <Watermark>
          <TagBadge>TAG</TagBadge>
          <TagRight>
            <TagCn>电脑技术网</TagCn>
            <TagUrl>www.tagxp.com</TagUrl>
          </TagRight>
        </Watermark>
      </Root>
    </>
  );
}
